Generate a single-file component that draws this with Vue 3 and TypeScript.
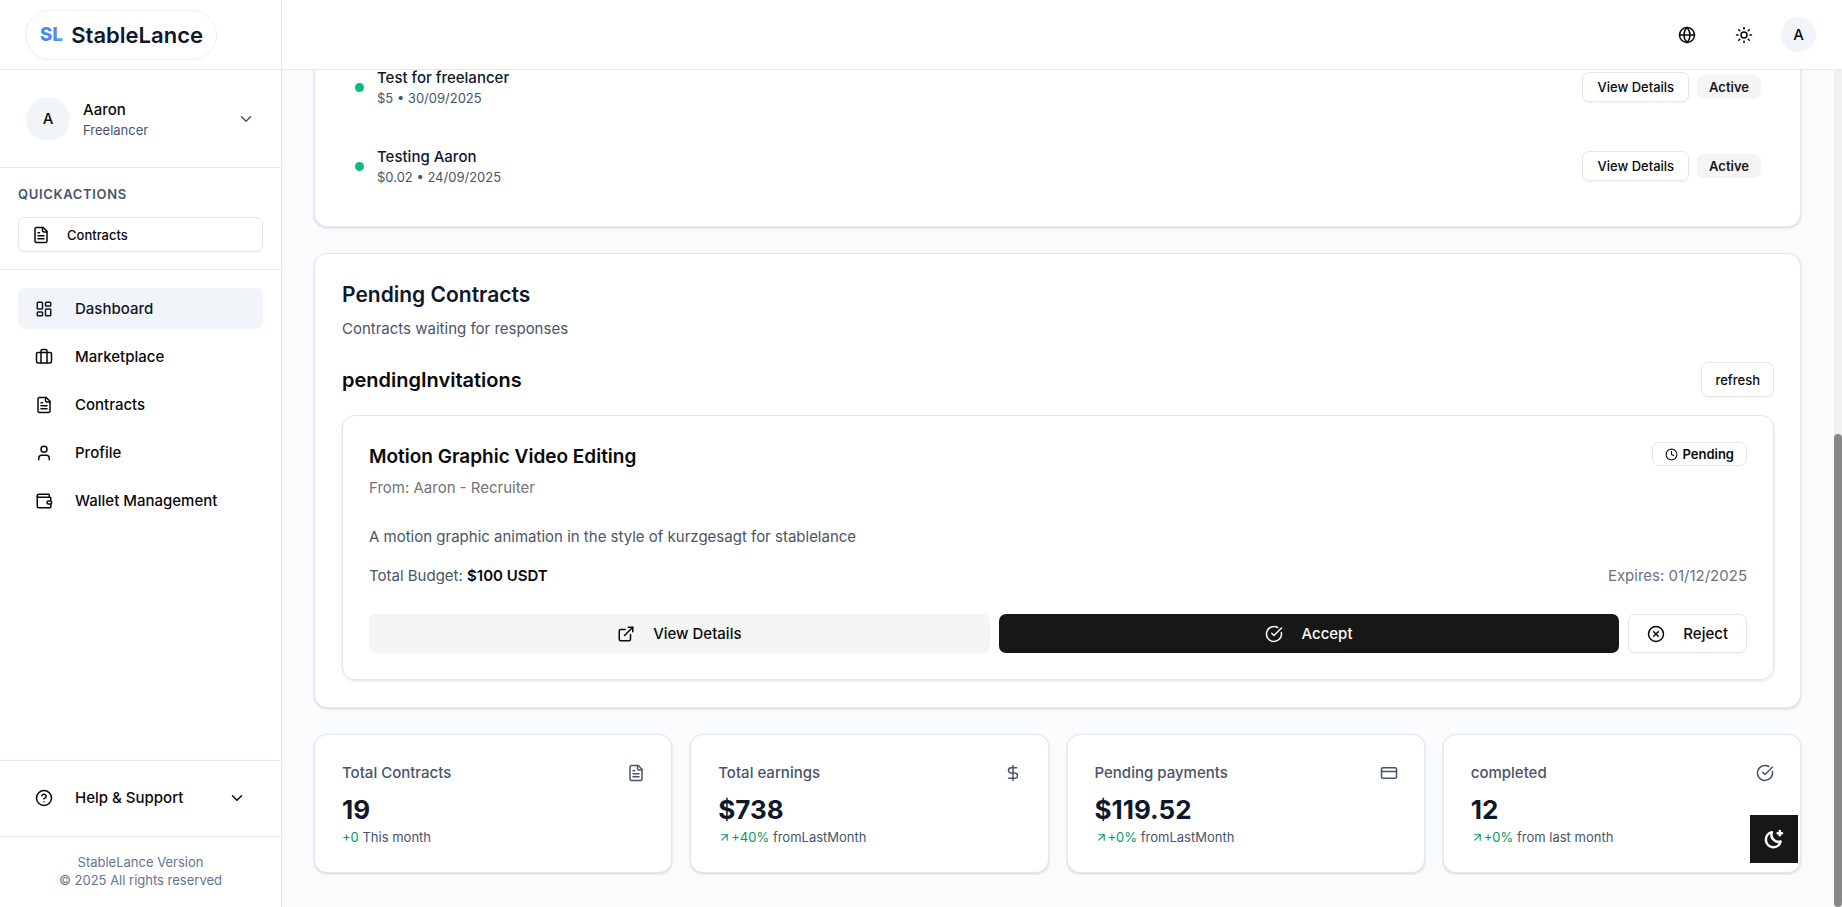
<script setup lang="ts">
import { ref } from 'vue'

type Shape = string[]

const icons: Record<string, Shape> = {
  file: [
    'M15 2H6a2 2 0 0 0-2 2v16a2 2 0 0 0 2 2h12a2 2 0 0 0 2-2V7Z',
    'M14 2v4a2 2 0 0 0 2 2h4',
    'M10 9H8',
    'M16 13H8',
    'M16 17H8',
  ],
  dashboard: [
    'M4 3h5a1 1 0 0 1 1 1v7a1 1 0 0 1-1 1H4a1 1 0 0 1-1-1V4a1 1 0 0 1 1-1Z',
    'M15 3h5a1 1 0 0 1 1 1v3a1 1 0 0 1-1 1h-5a1 1 0 0 1-1-1V4a1 1 0 0 1 1-1Z',
    'M15 12h5a1 1 0 0 1 1 1v7a1 1 0 0 1-1 1h-5a1 1 0 0 1-1-1v-7a1 1 0 0 1 1-1Z',
    'M4 16h5a1 1 0 0 1 1 1v3a1 1 0 0 1-1 1H4a1 1 0 0 1-1-1v-3a1 1 0 0 1 1-1Z',
  ],
  briefcase: [
    'M16 20V4a2 2 0 0 0-2-2h-4a2 2 0 0 0-2 2v16',
    'M4 6h16a2 2 0 0 1 2 2v10a2 2 0 0 1-2 2H4a2 2 0 0 1-2-2V8a2 2 0 0 1 2-2Z',
  ],
  user: ['M19 21v-2a4 4 0 0 0-4-4H9a4 4 0 0 0-4 4v2', 'M12 3a4 4 0 1 0 0 8a4 4 0 1 0 0-8'],
  wallet: [
    'M19 7V4a1 1 0 0 0-1-1H5a2 2 0 0 0 0 4h15a1 1 0 0 1 1 1v4h-3a2 2 0 0 0 0 4h3a1 1 0 0 0 1-1v-2a1 1 0 0 0-1-1',
    'M3 5v14a2 2 0 0 0 2 2h15a1 1 0 0 0 1-1v-4',
  ],
  help: ['M12 2a10 10 0 1 0 0 20a10 10 0 1 0 0-20', 'M9.09 9a3 3 0 0 1 5.83 1c0 2-3 3-3 3', 'M12 17h.01'],
  chevron: ['m6 9 6 6 6-6'],
  globe: [
    'M12 2a10 10 0 1 0 0 20a10 10 0 1 0 0-20',
    'M12 2a14.5 14.5 0 0 0 0 20 14.5 14.5 0 0 0 0-20',
    'M2 12h20',
  ],
  sun: [
    'M12 8a4 4 0 1 0 0 8a4 4 0 1 0 0-8',
    'M12 2v2',
    'M12 20v2',
    'm4.93 4.93 1.41 1.41',
    'm17.66 17.66 1.41 1.41',
    'M2 12h2',
    'M20 12h2',
    'm6.34 17.66-1.41 1.41',
    'm19.07 4.93-1.41 1.41',
  ],
  clock: ['M12 2a10 10 0 1 0 0 20a10 10 0 1 0 0-20', 'M12 6v6l4 2'],
  external: ['M15 3h6v6', 'M10 14 21 3', 'M18 13v6a2 2 0 0 1-2 2H5a2 2 0 0 1-2-2V8a2 2 0 0 1 2-2h6'],
  check: ['M21.801 10A10 10 0 1 1 17 3.335', 'm9 11 3 3L22 4'],
  reject: ['M12 2a10 10 0 1 0 0 20a10 10 0 1 0 0-20', 'm15 9-6 6', 'm9 9 6 6'],
  dollar: ['M12 2v20', 'M17 5H9.5a3.5 3.5 0 0 0 0 7h5a3.5 3.5 0 0 1 0 7H6'],
  card: ['M4 5h16a2 2 0 0 1 2 2v10a2 2 0 0 1-2 2H4a2 2 0 0 1-2-2V7a2 2 0 0 1 2-2Z', 'M2 10h20'],
  arrow: ['M7 7h10v10', 'M7 17 17 7'],
  moon: ['M9.500 4a8.500 8.500 0 0 0 10.500 11A9 9 0 1 1 9.500 4Z', 'M19 2.500v5', 'M21.500 5h-5'],
}

const active = ref('Dashboard')
const nav = [
  { label: 'Dashboard', icon: 'dashboard' },
  { label: 'Marketplace', icon: 'briefcase' },
  { label: 'Contracts', icon: 'file' },
  { label: 'Profile', icon: 'user' },
  { label: 'Wallet Management', icon: 'wallet' },
]

const contracts = [
  { title: 'Test for freelancer', meta: '$5 • 30/09/2025', status: 'Active' },
  { title: 'Testing Aaron', meta: '$0.02 • 24/09/2025', status: 'Active' },
]

const stats = [
  { label: 'Total Contracts', icon: 'file', value: '19', change: '+0', note: 'This month', trend: false },
  { label: 'Total earnings', icon: 'dollar', value: '$738', change: '+40%', note: 'fromLastMonth', trend: true },
  { label: 'Pending payments', icon: 'card', value: '$119.52', change: '+0%', note: 'fromLastMonth', trend: true },
  { label: 'completed', icon: 'check', value: '12', change: '+0%', note: 'from last month', trend: true },
]
</script>

<template>
  <div class="app">
    <aside class="sidebar">
      <div class="brand">
        <a class="logo" href="#">
          <span class="logo-mark">SL</span>
          <span class="logo-name">StableLance</span>
        </a>
      </div>

      <button class="account" type="button">
        <span class="avatar avatar-large">A</span>
        <span class="account-text">
          <span class="account-name">Aaron</span>
          <span class="account-role">Freelancer</span>
        </span>
        <svg class="icon muted" viewBox="0 0 24 24"><path v-for="d in icons.chevron" :key="d" :d="d" /></svg>
      </button>

      <section class="quick">
        <h2 class="quick-title">QUICKACTIONS</h2>
        <button class="quick-button outline" type="button">
          <svg class="icon" viewBox="0 0 24 24"><path v-for="d in icons.file" :key="d" :d="d" /></svg>
          Contracts
        </button>
      </section>

      <nav class="nav">
        <a
          v-for="item in nav"
          :key="item.label"
          class="nav-item"
          :class="{ current: item.label === active }"
          href="#"
          @click.prevent="active = item.label"
        >
          <svg class="icon" viewBox="0 0 24 24"><path v-for="d in icons[item.icon]" :key="d" :d="d" /></svg>
          {{ item.label }}
        </a>
      </nav>

      <div class="help">
        <button class="nav-item help-button" type="button">
          <svg class="icon" viewBox="0 0 24 24"><path v-for="d in icons.help" :key="d" :d="d" /></svg>
          <span class="grow">Help &amp; Support</span>
          <svg class="icon" viewBox="0 0 24 24"><path v-for="d in icons.chevron" :key="d" :d="d" /></svg>
        </button>
      </div>

      <footer class="legal">
        <div>StableLance Version</div>
        <div>© 2025 All rights reserved</div>
      </footer>
    </aside>

    <div class="page">
      <header class="topbar">
        <button class="icon-button" type="button" aria-label="Language">
          <svg class="icon" viewBox="0 0 24 24"><path v-for="d in icons.globe" :key="d" :d="d" /></svg>
        </button>
        <button class="icon-button" type="button" aria-label="Theme">
          <svg class="icon" viewBox="0 0 24 24"><path v-for="d in icons.sun" :key="d" :d="d" /></svg>
        </button>
        <button class="avatar" type="button">A</button>
      </header>

      <div class="body">
        <main class="content">
          <section class="card contracts">
            <article v-for="contract in contracts" :key="contract.title" class="contract">
              <span class="dot"></span>
              <div class="grow">
                <h3 class="contract-title">{{ contract.title }}</h3>
                <p class="contract-meta">{{ contract.meta }}</p>
              </div>
              <button class="outline details" type="button">View Details</button>
              <span class="status">{{ contract.status }}</span>
            </article>
          </section>

          <section class="card pending">
            <h2 class="card-title">Pending Contracts</h2>
            <p class="card-note">Contracts waiting for responses</p>
            <div class="row invitations-head">
              <h3 class="invitations-title">pendingInvitations</h3>
              <button class="outline refresh" type="button">refresh</button>
            </div>

            <article class="invitation">
              <div class="row top">
                <div>
                  <h4 class="invitation-title">Motion Graphic Video Editing</h4>
                  <p class="invitation-from">From: Aaron - Recruiter</p>
                </div>
                <span class="badge">
                  <svg class="icon icon-small" viewBox="0 0 24 24">
                    <path v-for="d in icons.clock" :key="d" :d="d" />
                  </svg>
                  Pending
                </span>
              </div>
              <p class="invitation-text">A motion graphic animation in the style of kurzgesagt for stablelance</p>
              <div class="row budget">
                <span>Total Budget: <strong>$100 USDT</strong></span>
                <span class="expires">Expires: 01/12/2025</span>
              </div>
              <div class="actions">
                <button class="action action-view" type="button">
                  <svg class="icon" viewBox="0 0 24 24"><path v-for="d in icons.external" :key="d" :d="d" /></svg>
                  View Details
                </button>
                <button class="action action-accept" type="button">
                  <svg class="icon" viewBox="0 0 24 24"><path v-for="d in icons.check" :key="d" :d="d" /></svg>
                  Accept
                </button>
                <button class="action outline action-reject" type="button">
                  <svg class="icon" viewBox="0 0 24 24"><path v-for="d in icons.reject" :key="d" :d="d" /></svg>
                  Reject
                </button>
              </div>
            </article>
          </section>

          <section class="stats">
            <article v-for="stat in stats" :key="stat.label" class="card stat">
              <div class="row stat-head">
                <h3 class="stat-label">{{ stat.label }}</h3>
                <svg class="icon" viewBox="0 0 24 24"><path v-for="d in icons[stat.icon]" :key="d" :d="d" /></svg>
              </div>
              <div class="stat-value">{{ stat.value }}</div>
              <p class="stat-note">
                <span class="change">
                  <svg v-if="stat.trend" class="icon icon-small icon-trend" viewBox="0 0 24 24">
                    <path v-for="d in icons.arrow" :key="d" :d="d" />
                  </svg>{{ stat.change }}</span>
                {{ stat.note }}
              </p>
            </article>
          </section>
        </main>
        <div class="scrollbar"><div class="thumb"></div></div>
      </div>
    </div>

    <button class="night" type="button" aria-label="Night mode">
      <svg class="icon moon" viewBox="0 0 24 24"><path v-for="d in icons.moon" :key="d" :d="d" /></svg>
    </button>
  </div>
</template>

<style>
body {
  margin: 0;
}
</style>

<style scoped>
* {
  box-sizing: border-box;
}
.app {
  display: flex;
  height: 100vh;
  overflow: hidden;
  background: #ffffff;
  color: #0a0a0a;
  font-family: Inter, 'Liberation Sans', sans-serif;
  font-size: 15px;
  line-height: 22px;
}
h2,
h3,
h4,
p {
  margin: 0;
}
button {
  border: 0;
  padding: 0;
  background: none;
  color: inherit;
  font: inherit;
  cursor: pointer;
}
a {
  color: inherit;
  text-decoration: none;
}
.grow {
  flex: 1;
}
.icon {
  width: 18px;
  height: 18px;
  flex: none;
  fill: none;
  stroke: currentColor;
  stroke-width: 2;
  stroke-linecap: round;
  stroke-linejoin: round;
}
.icon-small {
  width: 13px;
  height: 13px;
}
.icon-trend {
  vertical-align: -2px;
}
.outline {
  border: 1px solid #e5e5e5;
  border-radius: 7px;
  background: #ffffff;
  box-shadow: 0 1px 2px rgba(0, 0, 0, 0.05);
  font-size: 13px;
  font-weight: 500;
}
.avatar {
  display: flex;
  align-items: center;
  justify-content: center;
  width: 35px;
  height: 35px;
  border-radius: 50%;
  background: #f1f5f9;
  font-weight: 500;
}
.avatar-large {
  width: 44px;
  height: 44px;
}

.sidebar {
  display: flex;
  flex-direction: column;
  flex: none;
  width: 282px;
  border-right: 1px solid #e2e8f0;
}
.brand {
  display: flex;
  align-items: center;
  height: 70px;
  padding-left: 25px;
  border-bottom: 1px solid #e2e8f0;
}
.logo {
  display: flex;
  align-items: center;
  gap: 8px;
  height: 50px;
  padding: 0 13px 0 14px;
  border: 1px solid #eeeeee;
  border-radius: 25px;
}
.logo-mark {
  background: linear-gradient(100deg, #2b9af3 0%, #5b7cfa 55%, #38bdf8 100%);
  background-clip: text;
  color: transparent;
  font-size: 19px;
  font-weight: 800;
}
.logo-name {
  color: #0f172a;
  font-size: 22px;
  font-weight: 600;
}
.account {
  display: flex;
  align-items: center;
  gap: 13px;
  height: 98px;
  padding: 0 26px;
  border-bottom: 1px solid #e2e8f0;
  text-align: left;
}
.account-text {
  display: flex;
  flex: 1;
  flex-direction: column;
}
.account-name {
  font-weight: 500;
}
.account-role {
  color: #475569;
  font-size: 13px;
  line-height: 18px;
}
.muted {
  color: #475569;
}
.quick {
  padding: 17px 18px;
  border-bottom: 1px solid #e2e8f0;
}
.quick-title {
  margin-bottom: 14px;
  color: #475569;
  font-size: 13px;
  font-weight: 600;
  line-height: 18px;
  letter-spacing: 0.05em;
}
.quick-button {
  display: flex;
  align-items: center;
  gap: 17px;
  width: 100%;
  height: 35px;
  padding: 0 13px;
}
.nav {
  display: flex;
  flex: 1;
  flex-direction: column;
  gap: 7px;
  padding: 18px;
}
.nav-item {
  display: flex;
  align-items: center;
  gap: 22px;
  height: 41px;
  padding: 0 17px;
  border-radius: 7px;
  font-weight: 500;
}
.current {
  background: #f1f5f9;
  color: #0f172a;
}
.help {
  padding: 16px 18px 18px;
  border-top: 1px solid #e2e8f0;
}
.help-button {
  width: 100%;
  text-align: left;
}
.legal {
  padding: 16px 18px 18px;
  border-top: 1px solid #e2e8f0;
  color: #64748b;
  font-size: 13px;
  line-height: 18px;
  text-align: center;
}

.page {
  display: flex;
  flex: 1;
  flex-direction: column;
  min-width: 0;
}
.topbar {
  display: flex;
  align-items: center;
  justify-content: flex-end;
  gap: 18px;
  flex: none;
  height: 70px;
  padding-right: 26px;
  border-bottom: 1px solid #e2e8f0;
}
.icon-button {
  display: flex;
  align-items: center;
  justify-content: center;
  width: 39px;
  height: 39px;
}
.body {
  display: flex;
  flex: 1;
  min-height: 0;
}
.content {
  display: flex;
  flex: 1;
  flex-direction: column;
  justify-content: flex-end;
  gap: 26px;
  min-width: 0;
  overflow: hidden;
  padding: 0 33px 34px 32px;
  background: #f9fbfd;
}
.scrollbar {
  display: flex;
  flex-direction: column;
  justify-content: flex-end;
  width: 8px;
  background: #f1f1f1;
}
.thumb {
  height: 56.5%;
  border-radius: 4px;
  background: #888888;
}
.card {
  flex: none;
  padding: 26px 26px 26px 27px;
  border: 1px solid #e2e8f0;
  border-radius: 13px;
  background: #ffffff;
  box-shadow: 0 1px 3px rgba(0, 0, 0, 0.1), 0 1px 2px rgba(0, 0, 0, 0.06);
}
.pending {
  padding-bottom: 27px;
}
.row {
  display: flex;
  align-items: center;
  justify-content: space-between;
}
.top {
  align-items: flex-start;
}

.contracts {
  display: flex;
  flex-direction: column;
  gap: 11px;
}
.contract {
  display: flex;
  align-items: center;
  gap: 8px;
  height: 68px;
  padding: 0 13px;
}
.dot {
  width: 9px;
  height: 9px;
  margin-right: 5px;
  border-radius: 50%;
  background: #10b981;
}
.contract-title {
  color: #0f172a;
  font-size: 15px;
  font-weight: 500;
}
.contract-meta {
  color: #475569;
  font-size: 13px;
  line-height: 18px;
}
.details {
  height: 30px;
  padding: 0 14px;
}
.status {
  padding: 3px 12px;
  border-radius: 7px;
  background: #f5f5f5;
  color: #171717;
  font-size: 13px;
  font-weight: 600;
  line-height: 18px;
}

.card-title {
  margin-bottom: 8px;
  color: #0f172a;
  font-size: 21px;
  font-weight: 600;
  line-height: 30px;
}
.card-note {
  color: #475569;
}
.invitations-head {
  margin: 22px 0 18px;
}
.invitations-title {
  font-size: 20px;
  font-weight: 600;
}
.refresh {
  height: 35px;
  padding: 0 13px;
}
.invitation {
  padding: 26px;
  border: 1px solid #e5e5e5;
  border-radius: 13px;
  box-shadow: 0 1px 3px rgba(0, 0, 0, 0.1);
}
.invitation-title {
  margin-bottom: 5px;
  font-size: 19px;
  font-weight: 600;
  line-height: 30px;
}
.invitation-from {
  color: #737373;
}
.badge {
  display: flex;
  align-items: center;
  gap: 4px;
  padding: 2px 12px;
  border: 1px solid #e5e5e5;
  border-radius: 7px;
  font-size: 13px;
  font-weight: 600;
  line-height: 18px;
}
.invitation-text {
  margin: 27px 0 17px;
  color: #4b5563;
}
.budget {
  margin-bottom: 27px;
  color: #4b5563;
}
.budget strong {
  color: #0a0a0a;
  font-weight: 600;
}
.budget .expires {
  color: #6b7280;
}
.actions {
  display: flex;
  gap: 9px;
}
.action {
  display: flex;
  align-items: center;
  justify-content: center;
  gap: 18px;
  height: 39px;
  border-radius: 7px;
  font-size: 15px;
  font-weight: 500;
}
.action-view {
  flex: 1;
  background: #f5f5f5;
}
.action-accept {
  flex: 1;
  background: #171717;
  color: #fafafa;
}
.action-reject {
  padding: 0 18px;
}

.stats {
  display: grid;
  flex: none;
  grid-template-columns: repeat(4, 1fr);
  gap: 18px;
}
.stat {
  padding-top: 27px;
}
.stat-head {
  margin-bottom: 8px;
  color: #475569;
}
.stat-label {
  font-size: 15px;
  font-weight: 500;
}
.stat-value {
  color: #0f172a;
  font-size: 26px;
  font-weight: 700;
  line-height: 36px;
}
.stat-note {
  color: #475569;
  font-size: 13px;
  line-height: 18px;
}
.change {
  color: #059669;
}

.night {
  position: fixed;
  right: 44px;
  bottom: 44px;
  display: flex;
  align-items: center;
  justify-content: center;
  width: 48px;
  height: 48px;
  background: #171717;
  color: #ffffff;
}
.moon {
  width: 20px;
  height: 20px;
  stroke-width: 3;
}
</style>
